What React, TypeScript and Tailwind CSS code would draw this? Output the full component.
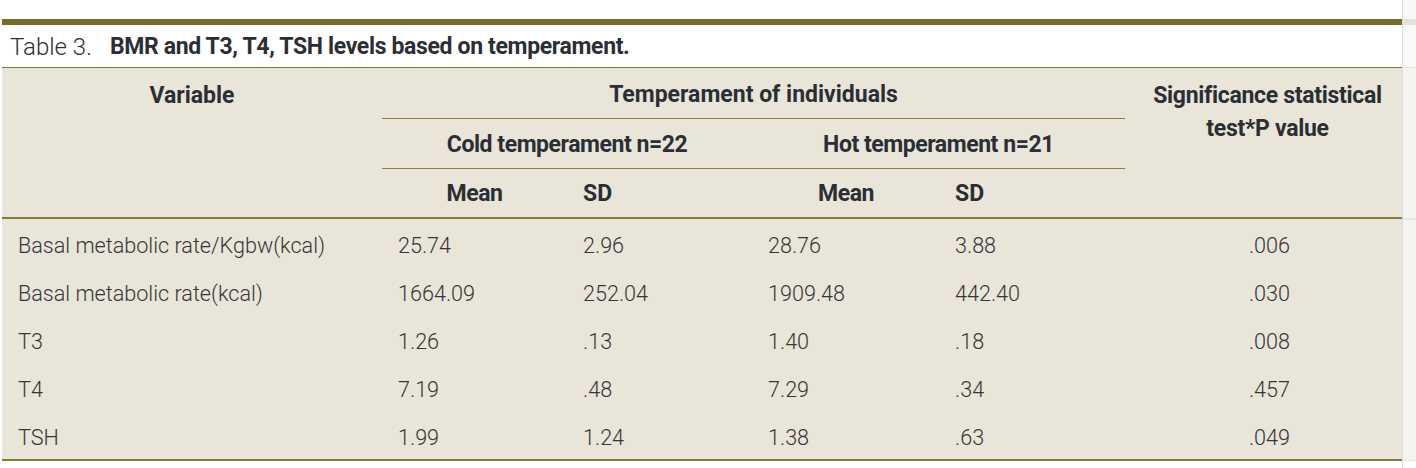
import React from 'react';

type Row = { label: string; coldMean: string; coldSd: string; hotMean: string; hotSd: string; p: string };

const rows: Row[] = [
    { label: 'Basal metabolic rate/Kgbw(kcal)', coldMean: '25.74', coldSd: '2.96', hotMean: '28.76', hotSd: '3.88', p: '.006' },
    { label: 'Basal metabolic rate(kcal)', coldMean: '1664.09', coldSd: '252.04', hotMean: '1909.48', hotSd: '442.40', p: '.030' },
    { label: 'T3', coldMean: '1.26', coldSd: '.13', hotMean: '1.40', hotSd: '.18', p: '.008' },
    { label: 'T4', coldMean: '7.19', coldSd: '.48', hotMean: '7.29', hotSd: '.34', p: '.457' },
    { label: 'TSH', coldMean: '1.99', coldSd: '1.24', hotMean: '1.38', hotSd: '.63', p: '.049' },
];

const cols = 'grid grid-cols-[380px_185px_185px_188px_185px_277px]';
const bold = "font-['Roboto',sans-serif] font-bold text-[#2b2e35] text-[23px]";
const light = "font-['Roboto','Open_Sans',sans-serif] font-light text-[#35363a] text-[21.6px]";

export default function App() {
    return (
        <div className="flex w-[1416px] h-[468px] bg-white overflow-hidden">
            <div className="w-[1402px] pl-[2px]">
                <div className="mt-[19px] h-[6px] bg-[#786b28]" />
                <div className="h-[42px] flex items-center pl-2 pt-[2px]">
                    <span className="font-['Roboto',sans-serif] font-light text-[24px] text-[#2b2e35] mr-[18px]">Table 3.</span>
                    <span className={bold + ' tracking-[-0.35px]'}>BMR and T3, T4, TSH levels based on temperament.</span>
                </div>

                <div className="bg-[#e9e5d8] border-t border-b-2 border-[#877a39]">
                    <div className={cols + ' grid-rows-[51px_50px_48px] ' + bold}>
                        <div className="row-span-3 text-center pt-[11px] leading-[33px]">Variable</div>
                        <div className="col-span-4 border-b border-[#8b7f40] flex items-center justify-center pt-1">Temperament of individuals</div>
                        <div className="row-span-3 text-center pt-[11px] leading-[33px] pl-2 tracking-[-0.3px]">
                            Significance statistical<br />test*P value
                        </div>
                        <div className="col-span-2 border-b border-[#8b7f40] flex items-center justify-center pt-[3px] tracking-[-0.45px]">Cold temperament n=22</div>
                        <div className="col-span-2 border-b border-[#8b7f40] flex items-center justify-center pt-[3px] tracking-[-0.45px]">Hot temperament n=21</div>
                        <div className="flex items-center justify-center pt-[2px] tracking-[-0.5px]">Mean</div>
                        <div className="flex items-center pl-4 pt-[2px]">SD</div>
                        <div className="flex items-center justify-center pt-[2px] tracking-[-0.5px]">Mean</div>
                        <div className="flex items-center pl-[15px] pt-[2px]">SD</div>
                    </div>

                    <div className="border-t-2 border-[#877a39]">
                        {rows.map((r) => (
                            <div key={r.label} className={cols + ' h-[48px] items-center pt-[6px] ' + light}>
                                <div className="pl-4">{r.label}</div>
                                <div className="pl-4">{r.coldMean}</div>
                                <div className="pl-4">{r.coldSd}</div>
                                <div className="pl-4">{r.hotMean}</div>
                                <div className="pl-[15px]">{r.hotSd}</div>
                                <div className="text-center pl-3">{r.p}</div>
                            </div>
                        ))}
                    </div>
                </div>
            </div>

            <div className="flex-1 border-l border-[#dadada] bg-[#f5f4f1] flex flex-col">
                <div className="h-[19px] bg-[#f8f8f8]" />
                <div className="h-[6px] bg-[#e3e2dc]" />
                <div className="h-[42px] bg-[#f9f9f9]" />
                <div className="h-[151px] border-t border-[#e4e4e4]" />
                <div className="h-[242px] border-t-2 border-[#e6e6e6]" />
                <div className="border-t border-[#e4e4e4] bg-white flex-1" />
            </div>
        </div>
    );
}
